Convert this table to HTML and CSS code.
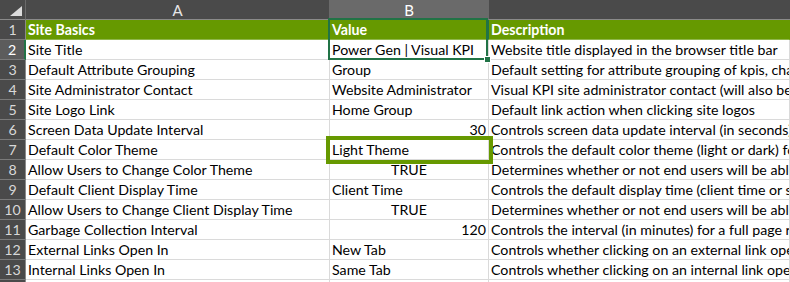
FILE: index.html
```html
<!DOCTYPE html>
<html>
<head>
<meta charset="utf-8">
<link rel="stylesheet" href="styles.css">
</head>
<body>
<div class="sheet">
  <div class="grid">
    <div class="corner"><span class="tri"></span></div>
    <div class="colhead">A</div>
    <div class="colhead sel">B</div>
    <div class="colhead last"></div>

    <div class="rowhead">1</div>
    <div class="cell head">Site Basics</div>
    <div class="cell head hb">Value</div>
    <div class="cell head">Description</div>

    <div class="rowhead sel">2</div>
    <div class="cell">Site Title</div>
    <div class="cell">Power Gen | Visual KPI</div>
    <div class="cell">Website title displayed in the browser title bar</div>

    <div class="rowhead">3</div>
    <div class="cell">Default Attribute Grouping</div>
    <div class="cell">Group</div>
    <div class="cell">Default setting for attribute grouping of kpis, charts</div>

    <div class="rowhead">4</div>
    <div class="cell">Site Administrator Contact</div>
    <div class="cell">Website Administrator</div>
    <div class="cell">Visual KPI site administrator contact (will also be used</div>

    <div class="rowhead">5</div>
    <div class="cell">Site Logo Link</div>
    <div class="cell">Home Group</div>
    <div class="cell">Default link action when clicking site logos</div>

    <div class="rowhead">6</div>
    <div class="cell">Screen Data Update Interval</div>
    <div class="cell num">30</div>
    <div class="cell">Controls screen data update interval (in seconds) for</div>

    <div class="rowhead">7</div>
    <div class="cell">Default Color Theme</div>
    <div class="cell boxed">Light Theme</div>
    <div class="cell">Controls the default color theme (light or dark) for</div>

    <div class="rowhead">8</div>
    <div class="cell">Allow Users to Change Color Theme</div>
    <div class="cell bool">TRUE</div>
    <div class="cell">Determines whether or not end users will be able</div>

    <div class="rowhead">9</div>
    <div class="cell">Default Client Display Time</div>
    <div class="cell">Client Time</div>
    <div class="cell">Controls the default display time (client time or server</div>

    <div class="rowhead">10</div>
    <div class="cell">Allow Users to Change Client Display Time</div>
    <div class="cell bool">TRUE</div>
    <div class="cell">Determines whether or not end users will be able</div>

    <div class="rowhead">11</div>
    <div class="cell">Garbage Collection Interval</div>
    <div class="cell num">120</div>
    <div class="cell">Controls the interval (in minutes) for a full page refresh</div>

    <div class="rowhead">12</div>
    <div class="cell">External Links Open In</div>
    <div class="cell">New Tab</div>
    <div class="cell">Controls whether clicking on an external link opens</div>

    <div class="rowhead">13</div>
    <div class="cell">Internal Links Open In</div>
    <div class="cell">Same Tab</div>
    <div class="cell">Controls whether clicking on an internal link opens</div>

    <div class="rowhead">14</div>
    <div class="cell"></div>
    <div class="cell"></div>
    <div class="cell"></div>
  </div>
  <div class="selection"><span class="handle"></span></div>
</div>
</body>
</html>
```

FILE: styles.css
```css
* { box-sizing: border-box; }
html, body { margin: 0; padding: 0; background: #ffffff; }
body { width: 790px; height: 282px; overflow: hidden; font-family: "Lato", "Liberation Sans", sans-serif; font-size: 14.2px; color: #000; }

.sheet { position: relative; width: 790px; height: 282px; overflow: hidden; }

.grid {
  display: grid;
  grid-template-columns: 26px 304px 159px 301px;
  grid-template-rows: 20px repeat(14, 20px);
}

.corner {
  background: #4a4a4a;
  border-right: 1px solid #6a6a6a;
  border-bottom: 1px solid #8a8a8a;
  position: relative;
}
.tri {
  position: absolute;
  right: 3px;
  bottom: 3px;
  width: 0; height: 0;
  border-left: 12px solid transparent;
  border-bottom: 10px solid #dcdcdc;
}

.colhead {
  background: #4a4a4a;
  color: #e6e6e6;
  text-align: center;
  line-height: 20px;
  font-size: 15px;
  border-right: 1px solid #6a6a6a;
  border-bottom: 1px solid #8a8a8a;
}
.colhead.sel { background: #6a6a6a; color: #ffffff; }
.colhead.last { border-right: none; }

.rowhead {
  background: #4a4a4a;
  color: #d8d8d8;
  text-align: center;
  line-height: 20px;
  font-size: 14.2px;
  border-right: 1px solid #8a8a8a;
  border-bottom: 1px solid #7a7a7a;
}
.rowhead.sel { background: #5c5c5c; color: #ffffff; border-right: 2px solid #217346; }

.cell {
  border-right: 1px solid #dadada;
  border-bottom: 1px solid #dadada;
  line-height: 20px;
  padding: 0 2px;
  white-space: nowrap;
  overflow: hidden;
}
.cell.head {
  background: #669900;
  color: #ffffff;
  font-weight: bold;
  border-right-color: #669900;
  border-bottom-color: #8fb64a;
}
.cell.hb { border-right: 1px solid #217346; }
.cell.num { text-align: right; }
.cell.bool { text-align: center; }
.cell.boxed {
  position: relative;
  z-index: 2;
  overflow: visible;
  outline: 4px solid #669900;
  outline-offset: 0;
}

.selection {
  position: absolute;
  left: 328px;
  top: 18px;
  width: 160px;
  height: 42px;
  border: 2px solid #217346;
  z-index: 3;
}
.handle {
  position: absolute;
  right: -5px;
  bottom: -5px;
  width: 7px;
  height: 7px;
  background: #217346;
  border: 1px solid #ffffff;
}
```
